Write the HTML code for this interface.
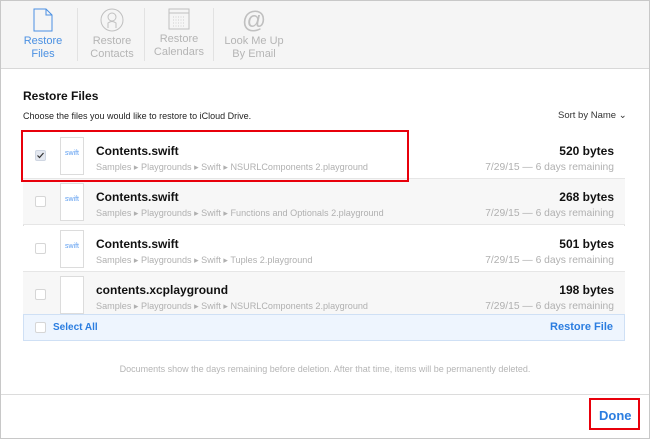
<!DOCTYPE html>
<html><head><style>
*{margin:0;padding:0;box-sizing:border-box}
body{width:650px;height:439px;background:#fff;font-family:"Liberation Sans",sans-serif;position:relative;overflow:hidden}
.frame{position:absolute;left:0;top:0;width:650px;height:439px;border:1px solid #c8c8c8;pointer-events:none}
.tb{position:absolute;left:0;top:0;width:650px;height:69px;background:#f5f5f5;border-bottom:1px solid #d8d8d8}
.tab{position:absolute;top:0;height:69px;text-align:center;font-size:11px;line-height:13px;color:#b5b5b5}
.tab svg{display:block;margin:8px auto 3px}
.sep{position:absolute;top:8px;width:1px;height:53px;background:#e2e2e2}
.abs{position:absolute}
.row{position:absolute;left:23px;width:602px;height:46px;border-bottom:1px solid #e6e6e6}
.cb{position:absolute;left:12px;top:17px;width:11px;height:11px;border:1px solid #d6d6d6;border-radius:2px;background:#fff}
.file{position:absolute;left:37px;top:4px;width:24px;height:38px;background:#fff;border:1px solid #dcdcdc;font-size:7px;color:#5a9cf0;text-align:center;line-height:32px}
.nm{position:absolute;left:73px;top:11px;font-size:12px;font-weight:bold;color:#111}
.pt{position:absolute;left:73px;top:29px;font-size:9.1px;color:#b0b0b0}
.sz{position:absolute;right:11px;top:11px;font-size:12px;font-weight:bold;color:#111}
.dt{position:absolute;right:11px;top:29px;font-size:10.3px;color:#b0b0b0}
</style></head><body>
<div class="tb">
 <div class="tab" style="left:16px;width:54px;color:#4a90e2"><svg width="20" height="24" viewBox="0 0 20 24"><path d="M1 1h12l6 6v16H1z M13 1v6h6" fill="none" stroke="#4a90e2" stroke-width="1"/></svg>Restore<br>Files</div>
 <div class="sep" style="left:77px"></div>
 <div class="tab" style="left:80px;width:64px"><svg width="24" height="24" viewBox="0 0 24 24"><circle cx="12" cy="12" r="11" fill="none" stroke="#c0c0c0"/><circle cx="12" cy="9" r="4" fill="none" stroke="#c0c0c0"/><path d="M8 20v-5q4-3 8 0v5" fill="none" stroke="#c0c0c0"/></svg>Restore<br>Contacts</div>
 <div class="sep" style="left:144px"></div>
 <div class="tab" style="left:146px;width:66px"><svg width="22" height="22" viewBox="0 0 22 22"><rect x="1" y="1" width="20" height="20" fill="none" stroke="#c0c0c0"/><path d="M1 5h20" stroke="#c0c0c0"/><path d="M5 9h12M5 12h12M5 15h12M5 18h12" stroke="#d0d0d0" stroke-dasharray="1 1.5"/></svg>Restore<br>Calendars</div>
 <div class="sep" style="left:213px"></div>
 <div class="tab" style="left:218px;width:72px"><svg width="24" height="24" viewBox="0 0 24 24"><text x="12" y="20" font-size="24" text-anchor="middle" fill="#c0c0c0" font-family="Liberation Sans">@</text></svg>Look Me Up<br>By Email</div>
</div>
<div class="abs" style="left:23px;top:89px;font-size:12px;font-weight:bold;color:#111">Restore Files</div>
<div class="abs" style="left:23px;top:111px;font-size:9px;color:#222">Choose the files you would like to restore to iCloud Drive.</div>
<div class="abs" style="left:558px;top:110px;font-size:9.5px;color:#333">Sort by Name ⌄</div>
<div class="abs" style="left:23px;top:133px;width:602px;height:208px;border:1px solid #dedede"></div>
<div class="row" style="top:133px;background:#fff"><div class="cb" style="background:#e4e8f0;border-color:#cfd6e2"><svg width="11" height="11" viewBox="0 0 11 11" style="position:absolute;left:-1px;top:-1px"><path d="M2.5 5.5l2 2 4-4.5" fill="none" stroke="#333" stroke-width="1.2"/></svg></div><div class="file">swift</div><div class="nm">Contents.swift</div><div class="pt">Samples ▸ Playgrounds ▸ Swift ▸ NSURLComponents 2.playground</div><div class="sz">520 bytes</div><div class="dt">7/29/15 — 6 days remaining</div></div>
<div class="row" style="top:179px;background:#f7f7f7"><div class="cb"></div><div class="file">swift</div><div class="nm">Contents.swift</div><div class="pt">Samples ▸ Playgrounds ▸ Swift ▸ Functions and Optionals 2.playground</div><div class="sz">268 bytes</div><div class="dt">7/29/15 — 6 days remaining</div></div>
<div class="row" style="top:226px;background:#fff"><div class="cb"></div><div class="file">swift</div><div class="nm">Contents.swift</div><div class="pt">Samples ▸ Playgrounds ▸ Swift ▸ Tuples 2.playground</div><div class="sz">501 bytes</div><div class="dt">7/29/15 — 6 days remaining</div></div>
<div class="row" style="top:272px;background:#f7f7f7;height:43px"><div class="cb"></div><div class="file" style="height:38px"></div><div class="nm">contents.xcplayground</div><div class="pt">Samples ▸ Playgrounds ▸ Swift ▸ NSURLComponents 2.playground</div><div class="sz">198 bytes</div><div class="dt">7/29/15 — 6 days remaining</div></div>
<div class="abs" style="left:23px;top:314px;width:602px;height:27px;background:#eef5fe;border:1px solid #cfe0f5"><div class="cb" style="top:7px;left:11px"></div><div class="abs" style="left:29px;top:7px;font-size:10px;font-weight:bold;color:#2b7de0">Select All</div><div class="abs" style="right:11px;top:6px;font-size:11px;font-weight:bold;color:#2b7de0">Restore File</div></div>
<div class="abs" style="left:0;width:650px;top:364px;text-align:center;font-size:9px;color:#b5b5b5">Documents show the days remaining before deletion. After that time, items will be permanently deleted.</div>
<div class="abs" style="left:0;top:394px;width:650px;height:1px;background:#dcdcdc"></div>
<div class="abs" style="left:599px;top:408px;font-size:13px;font-weight:bold;color:#2b7de0">Done</div>
<div class="abs" style="left:21px;top:130px;width:388px;height:52px;border:2px solid #e8000b"></div>
<div class="abs" style="left:589px;top:398px;width:51px;height:32px;border:2px solid #e8000b"></div>
<div class="frame"></div>
</body></html>
